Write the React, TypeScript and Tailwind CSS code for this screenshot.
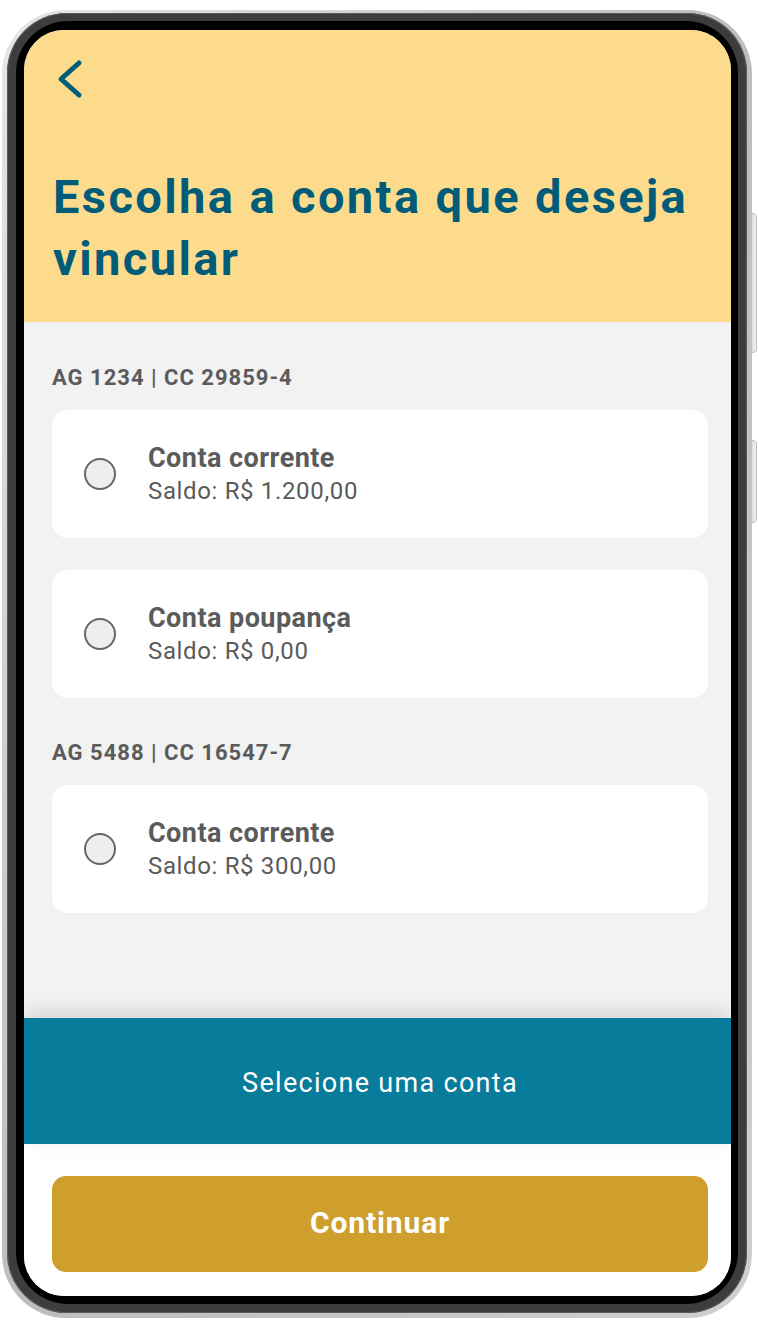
import { useState } from 'react'

type Account = { id: string; name: string; balance: string }
type Group = { label: string; accounts: Account[] }

const groups: Group[] = [
  {
    label: 'AG 1234 | CC 29859-4',
    accounts: [
      { id: 'a1', name: 'Conta corrente', balance: 'Saldo: R$ 1.200,00' },
      { id: 'a2', name: 'Conta poupança', balance: 'Saldo: R$ 0,00' },
    ],
  },
  {
    label: 'AG 5488 | CC 16547-7',
    accounts: [{ id: 'b1', name: 'Conta corrente', balance: 'Saldo: R$ 300,00' }],
  },
]

function AccountCard({ account, selected, onSelect }: { account: Account; selected: boolean; onSelect: () => void }) {
  return (
    <button
      type="button"
      onClick={onSelect}
      className="flex h-[128px] w-full items-center gap-[32px] rounded-[16px] bg-white pl-[32px] text-left"
    >
      <span className="grid h-[32px] w-[32px] shrink-0 place-items-center rounded-full border-2 border-[#666666] bg-[#eeeeee]">
        {selected ? <span className="h-[16px] w-[16px] rounded-full bg-[#087c9b]" /> : null}
      </span>
      <span className="flex flex-col text-[#5b5b5b]">
        <span className="text-[27px] font-bold leading-[34px] tracking-[0.45px]">{account.name}</span>
        <span className="text-[24px] leading-[32px] tracking-[0.65px]">{account.balance}</span>
      </span>
    </button>
  )
}

export default function App() {
  const [selected, setSelected] = useState<string | null>(null)

  return (
    <div className="min-h-screen bg-white pl-[2px] pt-[10px]" style={{ fontFamily: 'Roboto, "Noto Sans", sans-serif' }}>
      <div className="relative w-[750px]">
        {/* side buttons */}
        <div className="absolute left-[748px] top-[203px] h-[140px] w-[7px] rounded-r-[4px] border border-[#bdbdbd] bg-gradient-to-r from-[#d6d6d6] to-[#f4f4f4]" />
        <div className="absolute left-[748px] top-[430px] h-[83px] w-[7px] rounded-r-[4px] border border-[#bdbdbd] bg-gradient-to-r from-[#d6d6d6] to-[#f4f4f4]" />

        {/* phone frame */}
        <div className="relative rounded-[64px] bg-gradient-to-br from-[#e6e6e6] via-[#bdbdbd] to-[#cfcfcf] p-[5px] pt-[3px]">
          <div className="rounded-[60px] bg-[#3d3d3d] p-[9px] pt-[8px] shadow-[inset_0_0_0_1px_#5a5a5a]">
            <div className="rounded-[52px] bg-black p-[8px] pr-[7px] pt-[9px]">
              <div className="flex h-[1266px] flex-col overflow-hidden rounded-[40px] bg-[#f2f2f2]">
                {/* header */}
                <header className="h-[292px] shrink-0 bg-[#fcdb8d] pl-[33px] pt-[29px]">
                  <button type="button" aria-label="Voltar" className="block">
                    <svg width="26" height="40" viewBox="0 0 26 40" fill="none">
                      <polyline points="22,4 4,20 22,36" stroke="#005d78" strokeWidth="5" strokeLinecap="round" strokeLinejoin="round" />
                    </svg>
                  </button>
                  <h1 className="-ml-[4px] mt-[67px] text-[47px] font-bold leading-[62px] tracking-[2.4px] text-[#005c78]">
                    Escolha a conta que deseja vincular
                  </h1>
                </header>

                {/* account list */}
                <main className="flex-1 pl-[28px] pr-[23px] pt-[43px]">
                  {groups.map((g, gi) => (
                    <section key={g.label} className={gi > 0 ? 'mt-[42px]' : ''}>
                      <h2 className="mb-[19px] text-[22px] font-bold leading-[26px] tracking-[1px] text-[#5b5b5b]">{g.label}</h2>
                      <div className="flex flex-col gap-[32px]">
                        {g.accounts.map((a) => (
                          <AccountCard key={a.id} account={a} selected={selected === a.id} onSelect={() => setSelected(a.id)} />
                        ))}
                      </div>
                    </section>
                  ))}
                </main>

                {/* status band */}
                <div className="relative flex h-[126px] shrink-0 items-center justify-center bg-[#087c9b] pl-[5px] pt-[5px] shadow-[0_-6px_20px_rgba(0,0,0,0.13)]">
                  <span className="text-[27px] tracking-[1.3px] text-white">{selected ? 'Conta selecionada' : 'Selecione uma conta'}</span>
                </div>

                {/* footer */}
                <div className="h-[152px] shrink-0 bg-white pl-[28px] pr-[23px] pt-[32px]">
                  <button
                    type="button"
                    className="flex h-[96px] w-full items-center justify-center rounded-[14px] bg-[#cf9f2e] pb-[4px] text-[30px] font-bold tracking-[0.9px] text-white"
                  >
                    Continuar
                  </button>
                </div>
              </div>
            </div>
          </div>
        </div>
      </div>
    </div>
  )
}
